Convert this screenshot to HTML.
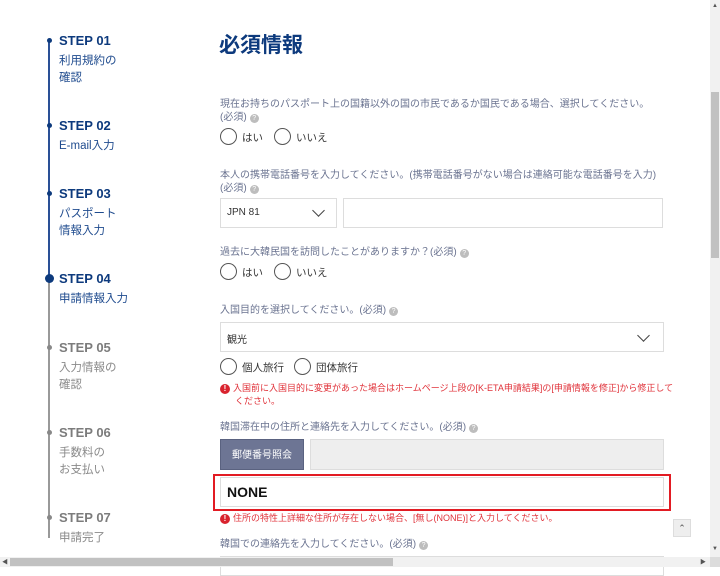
<!DOCTYPE html>
<html><head><meta charset="utf-8"><style>
*{margin:0;padding:0;box-sizing:border-box}
body{width:720px;height:567px;overflow:hidden;background:#fff;position:relative;font-family:"Liberation Sans","Noto Sans CJK JP",sans-serif}
.a{position:absolute;white-space:nowrap}
.st{font-size:13px;font-weight:bold;color:#0d3a7d}
.sd{font-size:11.5px;color:#1f4b8e;line-height:17px;margin-top:5px}
.g .st{color:#7c7c7c}.g .sd{color:#8a8a8a}
.dot{position:absolute;left:47px;width:5px;height:5px;border-radius:50%;background:#0d3a7d}
.lbl{font-size:10px;color:#6a7390;line-height:13px}
.q{display:inline-block;width:9px;height:9px;border-radius:50%;background:#bdbdbd;color:#fff;font-size:7px;text-align:center;line-height:9px;vertical-align:0px;margin-left:3px}
.r{position:absolute;width:17px;height:17px;border:1px solid #555;border-radius:50%}
.rt{font-size:10.5px;color:#333}
.box{position:absolute;border:1px solid #ddd;background:#fff}
.err{font-size:9px;color:#e0323a;line-height:13px}
.ei{display:inline-block;width:10px;height:10px;border-radius:50%;background:#d9232e;color:#fff;font-size:8px;font-weight:bold;text-align:center;line-height:10px;margin-right:3px}
.chev{position:absolute;width:9px;height:9px;border-right:1.3px solid #444;border-bottom:1.3px solid #444;transform:rotate(45deg)}
</style></head><body>
<div class="a" style="left:48px;top:40px;width:1.5px;height:238px;background:#2a5096"></div>
<div class="a" style="left:48px;top:278px;width:1.5px;height:260px;background:#999"></div>
<div class="dot" style="top:38px"></div>
<div class="dot" style="top:123px"></div>
<div class="dot" style="top:191px"></div>
<div class="dot" style="top:274px;left:45px;width:9px;height:9px"></div>
<div class="dot" style="top:345px;background:#888"></div>
<div class="dot" style="top:430px;background:#888"></div>
<div class="dot" style="top:515px;background:#888"></div>
<div class="a" style="left:59px;top:33px"><div class="st">STEP 01</div><div class="sd">利用規約の<br>確認</div></div>
<div class="a" style="left:59px;top:118px"><div class="st">STEP 02</div><div class="sd">E-mail入力</div></div>
<div class="a" style="left:59px;top:186px"><div class="st">STEP 03</div><div class="sd">パスポート<br>情報入力</div></div>
<div class="a" style="left:59px;top:271px"><div class="st">STEP 04</div><div class="sd">申請情報入力</div></div>
<div class="a g" style="left:59px;top:340px"><div class="st">STEP 05</div><div class="sd">入力情報の<br>確認</div></div>
<div class="a g" style="left:59px;top:425px"><div class="st">STEP 06</div><div class="sd">手数料の<br>お支払い</div></div>
<div class="a g" style="left:59px;top:510px"><div class="st">STEP 07</div><div class="sd">申請完了</div></div>

<div class="a" style="left:219px;top:29px;font-size:21px;font-weight:bold;color:#0d3a7d">必須情報</div>

<div class="a lbl" style="left:220px;top:98px">現在お持ちのパスポート上の国籍以外の国の市民であるか国民である場合、選択してください。<br>(必須)<span class="q">?</span></div>
<div class="r" style="left:220px;top:128px"></div><div class="a rt" style="left:242px;top:130px">はい</div>
<div class="r" style="left:274px;top:128px"></div><div class="a rt" style="left:296px;top:130px">いいえ</div>

<div class="a lbl" style="left:220px;top:169px">本人の携帯電話番号を入力してください。(携帯電話番号がない場合は連絡可能な電話番号を入力)<br>(必須)<span class="q">?</span></div>
<div class="box" style="left:220px;top:198px;width:117px;height:30px"></div>
<div class="a rt" style="left:227px;top:207px;font-size:10px">JPN 81</div>
<div class="chev" style="left:314px;top:206px"></div>
<div class="box" style="left:343px;top:198px;width:320px;height:30px"></div>

<div class="a lbl" style="left:220px;top:246px">過去に大韓民国を訪問したことがありますか？(必須)<span class="q">?</span></div>
<div class="r" style="left:220px;top:263px"></div><div class="a rt" style="left:242px;top:265px">はい</div>
<div class="r" style="left:274px;top:263px"></div><div class="a rt" style="left:296px;top:265px">いいえ</div>

<div class="a lbl" style="left:220px;top:304px">入国目的を選択してください。(必須)<span class="q">?</span></div>
<div class="box" style="left:220px;top:322px;width:444px;height:30px"></div>
<div class="a rt" style="left:227px;top:331px;font-size:10px">観光</div>
<div class="chev" style="left:639px;top:331px"></div>
<div class="r" style="left:220px;top:358px"></div><div class="a rt" style="left:242px;top:360px">個人旅行</div>
<div class="r" style="left:294px;top:358px"></div><div class="a rt" style="left:316px;top:360px">団体旅行</div>
<div class="a err" style="left:220px;top:382px"><span class="ei">!</span>入国前に入国目的に変更があった場合はホームページ上段の[K-ETA申請結果]の[申請情報を修正]から修正して<br><span style="padding-left:15px">ください。</span></div>

<div class="a lbl" style="left:220px;top:421px">韓国滞在中の住所と連絡先を入力してください。(必須)<span class="q">?</span></div>
<div class="a" style="left:220px;top:439px;width:84px;height:31px;background:#6d7594;color:#fff;font-size:10px;text-align:center;line-height:31px;border:1px solid #5a6280">郵便番号照会</div>
<div class="box" style="left:310px;top:439px;width:354px;height:31px;background:#eee"></div>
<div class="a" style="left:213px;top:474px;width:458px;height:37px;border:2px solid #e21b23"></div>
<div class="box" style="left:220px;top:477px;width:444px;height:30px"></div>
<div class="a" style="left:227px;top:484px;font-size:14px;font-weight:bold;color:#111">NONE</div>
<div class="a err" style="left:220px;top:512px"><span class="ei">!</span>住所の特性上詳細な住所が存在しない場合、[無し(NONE)]と入力してください。</div>
<div class="a lbl" style="left:220px;top:538px">韓国での連絡先を入力してください。(必須)<span class="q">?</span></div>
<div class="box" style="left:220px;top:556px;width:444px;height:20px"></div>

<div class="a" style="left:673px;top:519px;width:18px;height:18px;background:#eee;border:1px solid #ddd;font-size:9px;color:#555;text-align:center;line-height:16px">⌃</div>

<div class="a" style="left:710px;top:0;width:10px;height:557px;background:#f1f1f1"></div>
<div class="a" style="left:711px;top:92px;width:8px;height:166px;background:#c1c1c1"></div>
<div class="a" style="left:712px;top:3px;font-size:6px;color:#555">▲</div>
<div class="a" style="left:712px;top:546px;font-size:6px;color:#555">▼</div>
<div class="a" style="left:0;top:557px;width:710px;height:10px;background:#f1f1f1"></div>
<div class="a" style="left:10px;top:558px;width:383px;height:8px;background:#c1c1c1"></div>
<div class="a" style="left:2px;top:557px;font-size:6px;color:#555">◀</div>
<div class="a" style="left:700px;top:557px;font-size:6px;color:#555">▶</div>
<div class="a" style="left:710px;top:557px;width:10px;height:10px;background:#dcdcdc"></div>
</body></html>
